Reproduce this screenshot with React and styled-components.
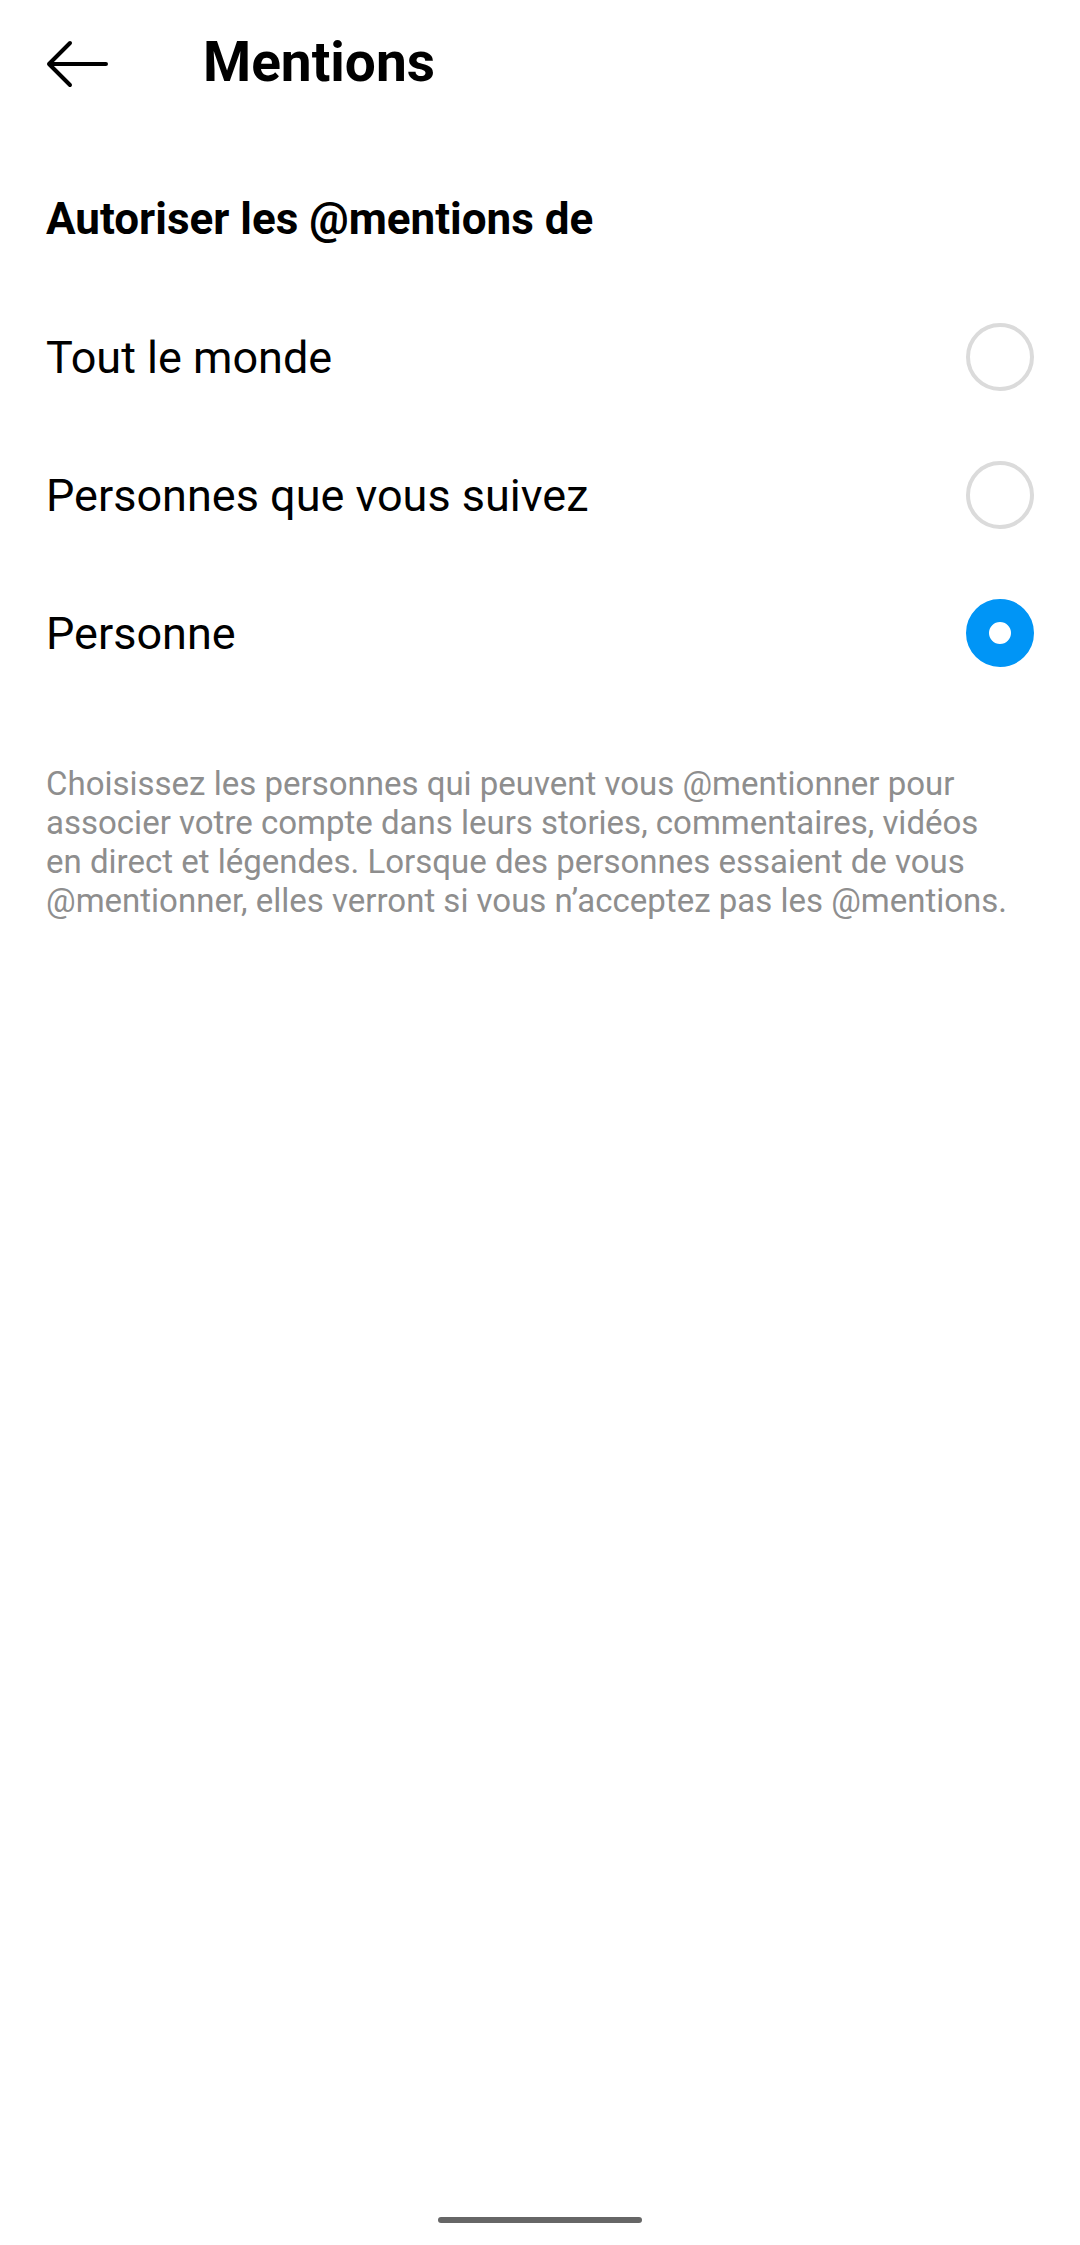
import React, { useState } from 'react'
import styled, { createGlobalStyle } from 'styled-components'

const GlobalStyle = createGlobalStyle`
	html, body {
		margin: 0;
		padding: 0;
		background: #ffffff;
	}
	body {
		font-family: Roboto, "Noto Sans", sans-serif;
		color: #000;
	}
`

const Screen = styled.div`
	width: 1080px;
	height: 2245px;
	display: flex;
	flex-direction: column;
	background: #ffffff;
	box-sizing: border-box;
`

const Header = styled.div`
	height: 128px;
	display: flex;
	align-items: center;
	padding-left: 46px;
	box-sizing: border-box;
`

const BackButton = styled.button`
	width: 62px;
	height: 48px;
	padding: 0;
	border: none;
	background: transparent;
	display: flex;
	align-items: center;
	justify-content: center;
	cursor: pointer;
`

const Title = styled.h1`
	margin: -4px 0 0 95px;
	font-size: 55px;
	font-weight: 700;
	line-height: 64px;
`

const SectionTitle = styled.h2`
	margin: 61px 0 39px;
	padding: 0 46px;
	font-size: 44px;
	font-weight: 700;
	line-height: 60px;
`

const Option = styled.label`
	height: 138px;
	display: flex;
	align-items: center;
	justify-content: space-between;
	padding: 0 46px;
	cursor: pointer;
`

const OptionText = styled.span`
	font-size: 45px;
	font-weight: 400;
`

const Radio = styled.span`
	width: 68px;
	height: 68px;
	border-radius: 50%;
	box-sizing: border-box;
	border: ${p => (p.$checked ? '23px solid #0095f6' : '4px solid #dbdbdb')};
	background: #ffffff;
`

const Description = styled.p`
	margin: 62px 0 0;
	padding: 0 64px 0 46px;
	font-size: 33px;
	line-height: 39px;
	color: #8e8e8e;
`

const Spacer = styled.div`
	flex: 1;
`

const HomeBar = styled.div`
	height: 28px;
	display: flex;
	justify-content: center;
	align-items: flex-start;
	div {
		width: 204px;
		height: 6px;
		border-radius: 3px;
		background: #666666;
	}
`

const options = ['Tout le monde', 'Personnes que vous suivez', 'Personne']

const App = () => {
	const [selected, setSelected] = useState(2)

	return (
		<Screen>
			<GlobalStyle />
			<Header>
				<BackButton aria-label="Retour">
					<svg width="62" height="48" viewBox="0 0 62 48" fill="none">
						<path
							d="M60 24H3M24 3L3 24L24 45"
							stroke="#000"
							strokeWidth="4"
							strokeLinecap="round"
							strokeLinejoin="round"
						/>
					</svg>
				</BackButton>
				<Title>Mentions</Title>
			</Header>

			<SectionTitle>Autoriser les @mentions de</SectionTitle>

			{options.map((label, i) => (
				<Option key={label} onClick={() => setSelected(i)}>
					<OptionText>{label}</OptionText>
					<Radio $checked={selected === i} />
				</Option>
			))}

			<Description>
				Choisissez les personnes qui peuvent vous @mentionner pour associer votre compte dans leurs stories,
				commentaires, vidéos en direct et légendes. Lorsque des personnes essaient de vous @mentionner, elles
				verront si vous n’acceptez pas les @mentions.
			</Description>

			<Spacer />
			<HomeBar>
				<div />
			</HomeBar>
		</Screen>
	)
}

export default App
